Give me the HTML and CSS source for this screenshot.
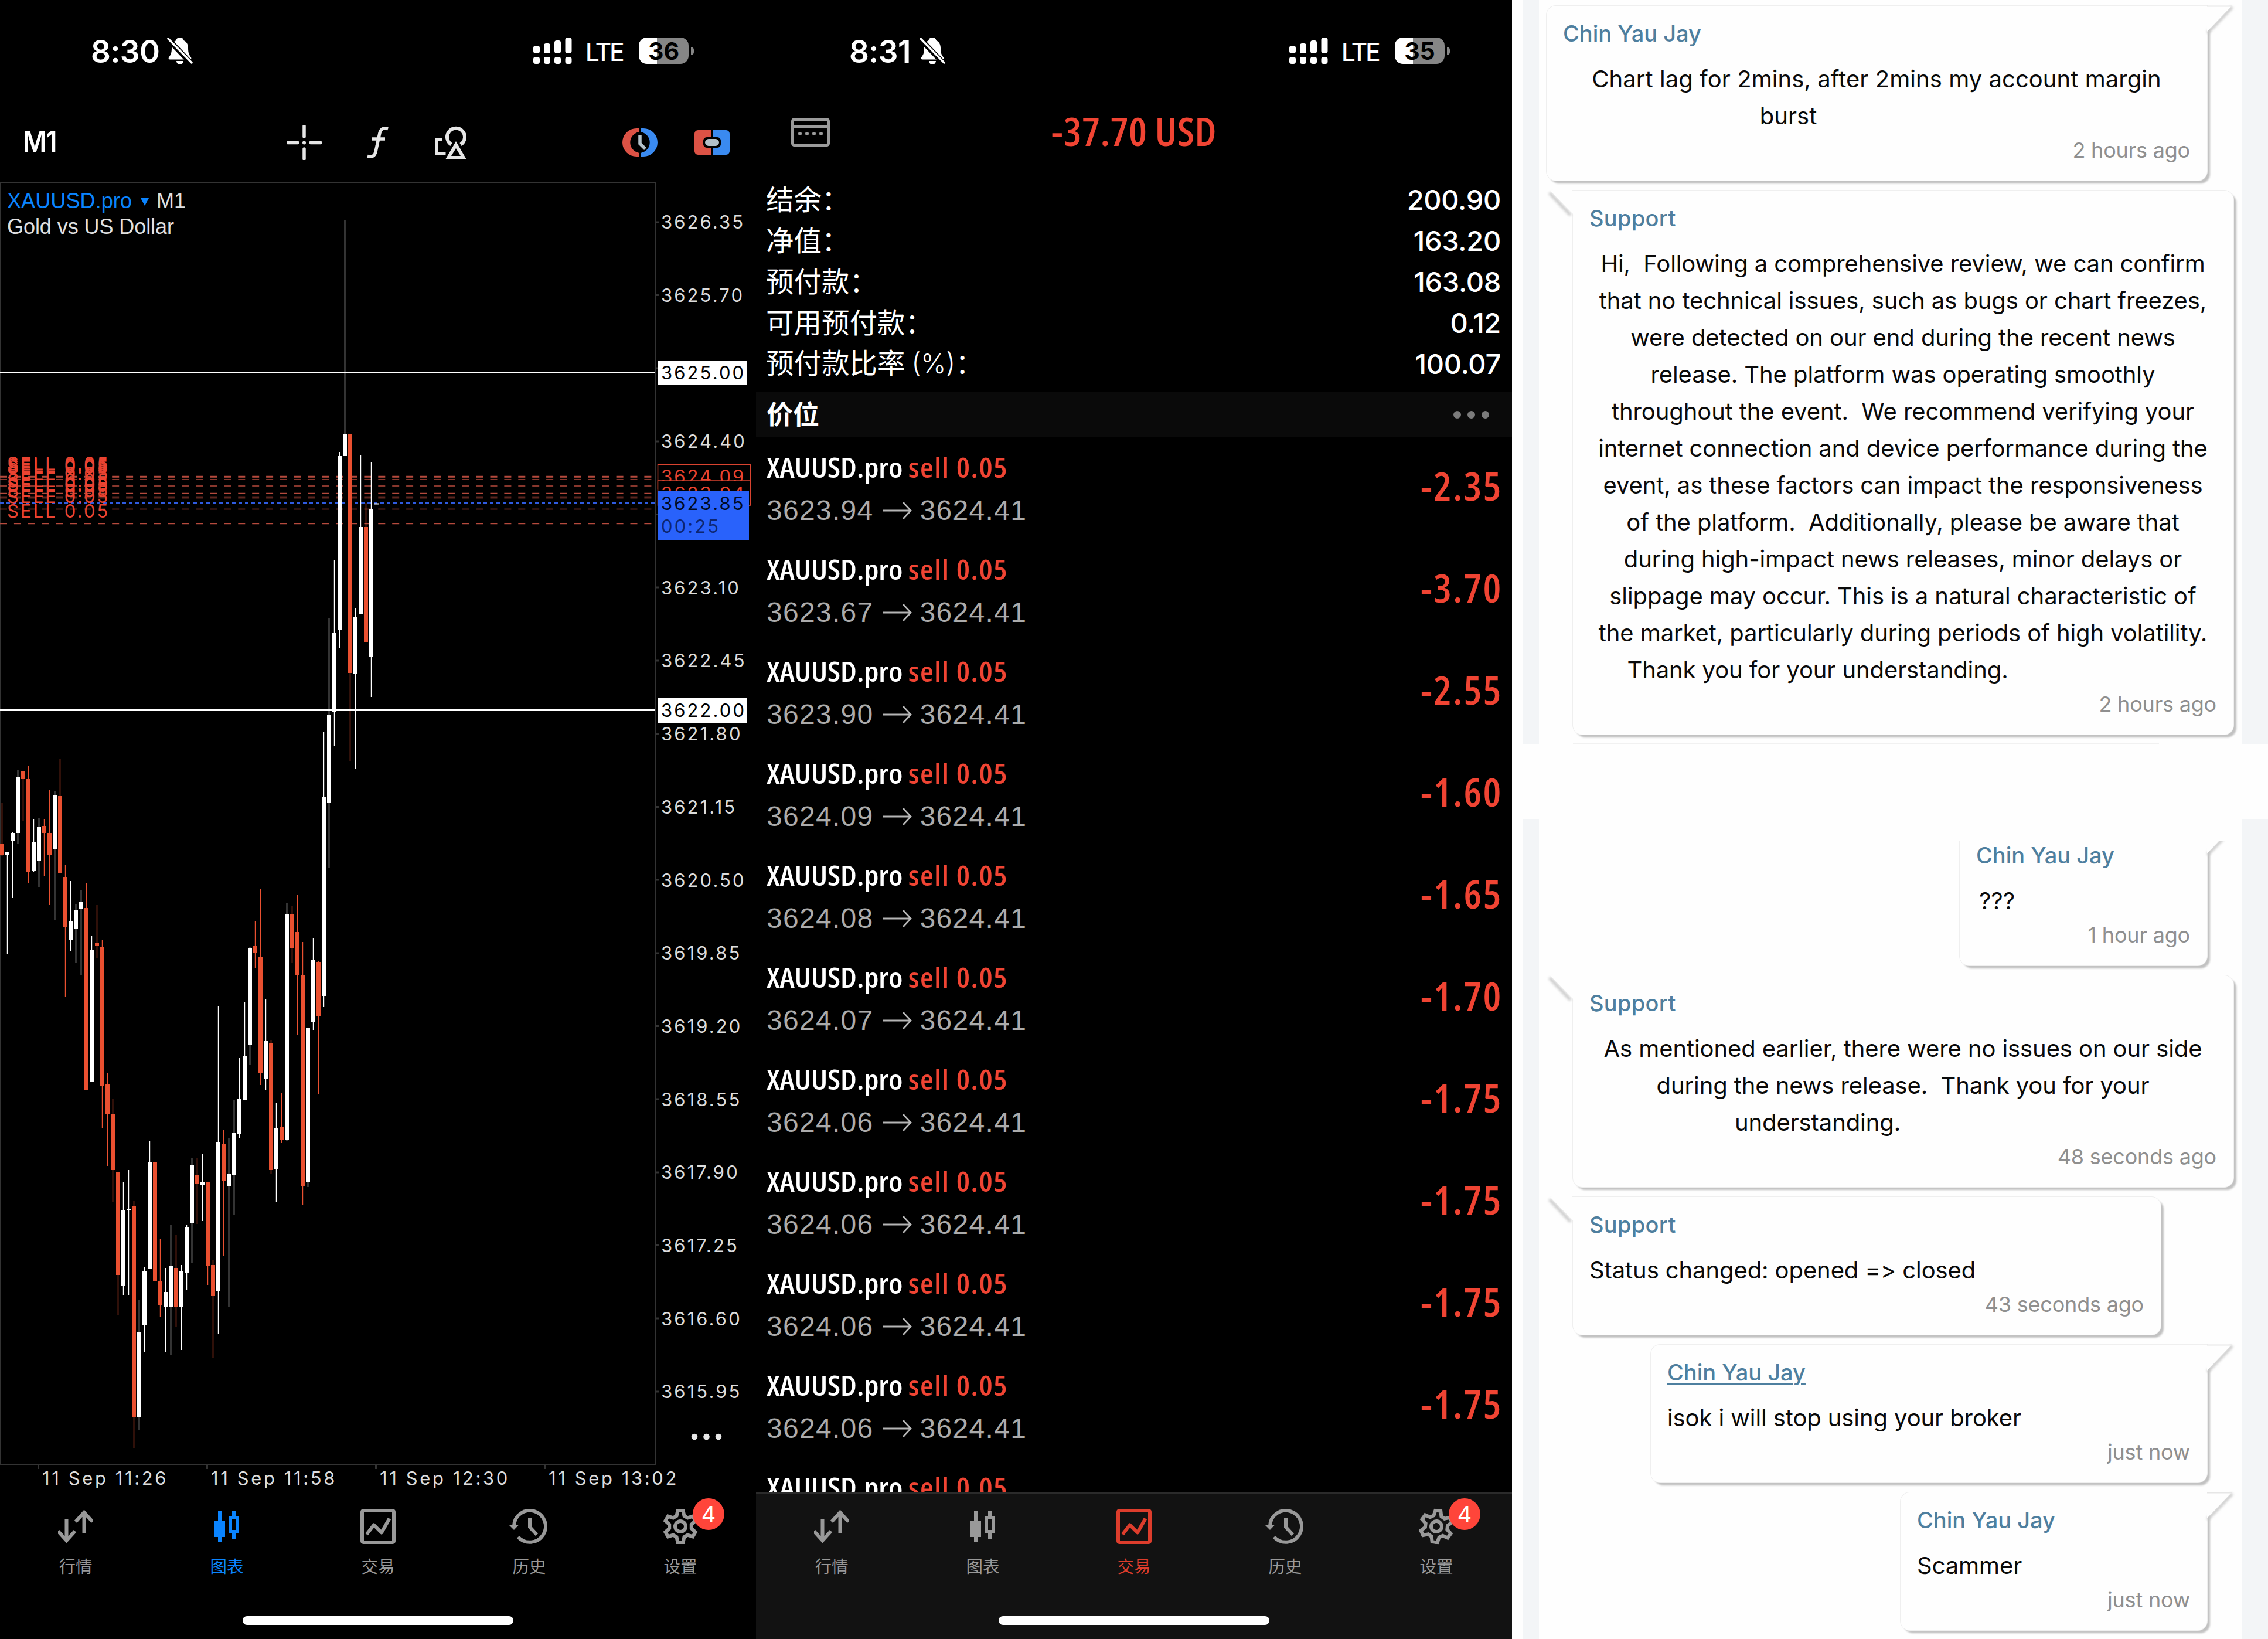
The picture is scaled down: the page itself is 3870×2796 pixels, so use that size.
FILE: index.html
```
<!DOCTYPE html>
<html lang="zh-CN">
<head>
<meta charset="utf-8">
<title>XAUUSD.pro</title>
<link rel="stylesheet" href="styles.css">
</head>
<body>
<svg class="sprite" aria-hidden="true">
  <symbol id="i-bell" viewBox="0 0 44 48">
    <path fill="currentColor" d="M22 1c-4 0-6 2-6.500 5C10.500 8 8 13 8 19c0 9-2 12-5 16-1 2 0 3.500 2 3.500h34c2 0 3-1.500 2-3.500-3-4-5-7-5-16 0-6-2.500-11-7.500-13C28 3 26 1 22 1zM16 41h12c-.5 4-3 6-6 6s-5.500-2-6-6z"/>
    <path d="M1 3l40 42" stroke="#000" stroke-width="9"/>
    <path d="M2 3l40 41" stroke="currentColor" stroke-width="3.500" stroke-linecap="round"/>
  </symbol>
  <symbol id="i-signal" viewBox="0 0 66 46">
    <g fill="currentColor">
      <rect x="0" y="14" width="11" height="13" rx="4"/><rect x="18" y="10" width="11" height="17" rx="4"/>
      <rect x="36" y="5" width="11" height="22" rx="4"/><rect x="54.500" y="0" width="11" height="27" rx="4"/>
      <rect x="0" y="33" width="11" height="12" rx="4"/><rect x="18" y="33" width="11" height="12" rx="4"/>
      <rect x="36" y="33" width="11" height="12" rx="4"/><rect x="54.500" y="33" width="11" height="12" rx="4"/>
    </g>
  </symbol>
  <symbol id="i-quotes" viewBox="0 0 60 60">
    <g fill="none" stroke="currentColor" stroke-width="6"><path d="M14.500 18v36M0 38l14.500 16L29 38"/><path d="M44.500 42V6M30 22L44.500 6 59 22"/></g>
  </symbol>
  <symbol id="i-chart" viewBox="0 0 60 60">
    <g fill="currentColor"><path d="M15 3h6v18h6v27h-6v9h-6v-9H9V21h6z"/><path fill-rule="evenodd" d="M39 3h6v9h6v30h-6v9h-6v-9h-6V12h6zM39 18v18h6V18z"/></g>
  </symbol>
  <symbol id="i-trade" viewBox="0 0 60 60">
    <g fill="none" stroke="currentColor" stroke-width="6"><rect x="3" y="3" width="54" height="54" rx="2"/><path d="M10.500 43.500L23 27.500l13 13L49.500 16.500" stroke-linejoin="round"/></g>
  </symbol>
  <symbol id="i-history" viewBox="-5 0 66 60">
    <g fill="none" stroke="currentColor" stroke-width="6"><path d="M4 29A27 27 0 1 1 11 48"/><path d="M31 15v16l12 13"/></g>
    <path fill="currentColor" d="M-5 27h17.500L4 36z"/>
  </symbol>
  <symbol id="i-settings" viewBox="-30 -30 60 60">
    <g fill="none" stroke="currentColor" stroke-width="6">
      <path d="M-6.500-18L-4.500-27H4.500L6.500-18 12.300-14.600 21.100-17.400 25.600-9.600 18.800-3.400V3.400L25.600 9.600 21.100 17.400 12.300 14.600 6.500 18 4.500 27H-4.500L-6.500 18-12.300 14.600-21.100 17.400-25.600 9.600-18.800 3.400V-3.400L-25.600-9.600-21.100-17.400-12.300-14.600z"/>
      <circle r="9"/>
    </g>
  </symbol>
</svg>

<main class="board">
  <section class="phone">
    <header class="status">
      <span class="status__time">8:30</span>
      <svg class="status__bell"><use href="#i-bell"/></svg>
      <svg class="status__signal"><use href="#i-signal"/></svg>
      <span class="status__net">LTE</span>
      <span class="battery"><span class="battery__body">36</span><i class="battery__nub"></i></span>
    </header>

    <nav class="toolbar">
      <span class="toolbar__tf">M1</span>
      <svg class="tool tool--cross" viewBox="0 0 60 60"><path d="M30 2v18M30 41v17M2 30.500h17M41 30.500h17" stroke="#e6e6e6" stroke-width="5.500" stroke-linecap="round"/><circle cx="30" cy="30.500" r="3" fill="#e6e6e6"/></svg>
      <svg class="tool tool--fn" viewBox="0 0 38 54"><path d="M37 4c-8-3-13 0-14.500 9L16 43c-1.500 7-6 9.500-14 7.500M9 21h23" fill="none" stroke="#e6e6e6" stroke-width="5.500"/></svg>
      <svg class="tool tool--shapes" viewBox="0 0 54 58"><g fill="none" stroke="#e6e6e6" stroke-width="6"><path d="M13 24H3v24h15.500"/><path d="M28 32.500A15 15 0 1 1 44 32.500"/></g><path fill="#e6e6e6" fill-rule="evenodd" d="M36 27l18 31H18zM36 39l-8 13h16z"/></svg>
      <svg class="tool tool--clock" viewBox="0 0 60 48"><path d="M28 0v6.300a18 18 0 0 0 0 35.400V48h-4a24 24 0 0 1 0-48z" fill="#dc5245"/><path d="M32 0v6.300a18 18 0 0 1 0 35.400V48h4a24 24 0 0 0 0-48z" fill="#3a8af0"/><path d="M30 12v14l9 9" fill="none" stroke="#b3c0c8" stroke-width="5.500"/></svg>
      <svg class="tool tool--one" viewBox="0 0 60 42"><path d="M6 0h22.500v42H6a6 6 0 0 1-6-6V6a6 6 0 0 1 6-6z" fill="#dc5245"/><path d="M31.500 0H54a6 6 0 0 1 6 6v30a6 6 0 0 1-6 6H31.500z" fill="#3a8af0"/><rect x="15" y="12" width="30" height="18" rx="6"/><rect x="18" y="15" width="24" height="12" rx="6" fill="#b3c0c8"/></svg>
    </nav>

    <svg class="chart" viewBox="0 310 1290 2236">
      <g fill="none" stroke="#333">
        <path d="M0 311.500H1119M0 2498.500H1119" stroke-width="3"/>
        <path d="M1 311V2499M1118.500 311V2499" stroke-width="2"/>
        <path d="M65.500 2500v6M353.500 2500v6M641.500 2500v6M930 2500v6" stroke-width="3"/>
        <path d="M1119 379h5M1119 503.500h5M1119 628h5M1119 753h5M1119 877.500h5M1119 1002h5M1119 1127h5M1119 1252h5M1119 1376.500h5M1119 1501h5M1119 1626h5M1119 1750.500h5M1119 1875h5M1119 2000h5M1119 2124.500h5M1119 2249h5M1119 2374h5" stroke-width="3"/>
      </g>

      <g class="orders" stroke="#b54a3d" stroke-width="1.700" stroke-dasharray="12 11.900">
        <path d="M0 812.500H1117M0 815H1117M0 818H1117M0 829H1117M0 841.500H1117M0 847.500H1117M0 849.500H1117M0 868.500H1117M0 893.500H1117"/>
      </g>
      <path d="M0 858H1117" stroke="#2f5be0" stroke-width="3" stroke-dasharray="6 5"/>

      <g fill="none" stroke="#fff">
        <path stroke-width="1.400" d="M12.500 1453V1628M21.500 1419V1532M30.500 1313V1440M57.500 1398V1488M66.500 1396V1513M93.500 1350V1570M120.500 1503V1622M129.500 1542V1643M138.500 1519V1663M156.500 1597V1845M210.500 2017V2209M219.500 1996V2209M237.500 2217V2440M246.500 2161V2307M255.500 1946V2165M282.500 2163V2307M291.500 2090V2311M309.500 2158V2303M318.500 2090V2200M327.500 1975V2154M345.500 1968V2083M372.500 1716V2275M390.500 1941V2229M399.500 1877V2073M408.500 1805V1941M417.500 1709V1876M426.500 1615V1816M453.500 1705V1860M471.500 1881V2050M489.500 1540V1946M525.500 1753V2025M534.500 1601V1757M552.500 1248V1718M561.500 1054V1480M570.500 955V1273M579.500 771V1106M588.500 375V740M606.500 1037V1311M615.500 776V1047M633.500 788V1189"/>
        <path stroke-width="7" d="M12.500 1453V1459M21.500 1421V1434M30.500 1325V1421M57.500 1436V1486M66.500 1411V1469M93.500 1356V1448M120.500 1572V1603M129.500 1553V1584M138.500 1538V1551M156.500 1620V1845M210.500 2065V2194M219.500 2062V2065M237.500 2273V2418M246.500 2169V2261M255.500 1983V2165M282.500 2204V2230M291.500 2159V2229M309.500 2169V2230M318.500 2094V2171M327.500 1987V2087M345.500 2016V2021M372.500 1948V2202M390.500 2002V2023M399.500 1933V2004M408.500 1874V1935M417.500 1801V1876M426.500 1618V1782M453.500 1776V1841M471.500 1925V1994M489.500 1559V1945M525.500 1753V2016M534.500 1638V1743M552.500 1359V1699M561.500 1219V1369M570.500 1079V1214M579.500 778V1074M588.500 740V778M606.500 1053V1150M615.500 899V1047M633.500 868V1120"/>
        <path stroke-width="2" d="M638 859.500H646"/>
      </g>
      <g fill="none" stroke="#ea5030">
        <path stroke-width="1.400" d="M3.500 1369V1461M39.500 1315V1400M48.500 1306V1507M75.500 1398V1494M84.500 1348V1544M102.500 1294V1490M111.500 1476V1701M147.500 1507V1860M165.500 1544V1634M174.500 1603V1925M183.500 1831V1989M192.500 1874V2050M201.500 2000V2244M228.500 2048V2470M273.500 2113V2246M300.500 2106V2263M336.500 1975V2088M354.500 2016V2192M363.500 2150V2317M381.500 1927V2142M435.500 1572V1651M444.500 1517V1851M462.500 1774V2002M480.500 1864V1950M498.500 1546V1643M507.500 1526V1766M516.500 1607V2056M543.500 1640V1866M597.500 740V1298M624.500 858V1095"/>
        <path stroke-width="7" d="M3.500 1440V1459M39.500 1315V1329M48.500 1329V1488M75.500 1409V1421M84.500 1421V1459M102.500 1358V1490M111.500 1496V1582M147.500 1549V1860M165.500 1609V1613M174.500 1615V1852M183.500 1849V1900M192.500 1900V1996M201.500 2000V2175M228.500 2058V2418M264.500 1983V2186M273.500 2186V2227M300.500 2163V2230M336.500 2004V2019M354.500 2016V2159M363.500 2158V2211M381.500 1952V2014M435.500 1613V1626M444.500 1632V1831M462.500 1780V1996M480.500 1923V1945M498.500 1559V1618M507.500 1590V1663M516.500 1663V2023M543.500 1641V1734M597.500 740V1148M624.500 899V1095"/>
      </g>
      <path d="M0 635.500H1117M0 1211.500H1117" stroke="#fff" stroke-width="3"/>

      <g class="sell">
        <text x="12" y="802">SELL 0.05</text><text x="12" y="804.500">SELL 0.05</text><text x="12" y="807.500">SELL 0.05</text>
        <text x="12" y="818.500">SELL 0.05</text><text x="12" y="831">SELL 0.05</text><text x="12" y="837">SELL 0.05</text>
        <text x="12" y="839">SELL 0.05</text><text x="12" y="847.500">SELL 0.05</text><text x="12" y="857.500">SELL 0.05</text>
        <text x="12" y="882.500">SELL 0.05</text>
      </g>

      <text class="legend legend--sym" x="12" y="355" textLength="213">XAUUSD.pro</text>
      <path d="M240 338h14l-7 13z" fill="#0a84ff"/>
      <text class="legend" x="267" y="355">M1</text>
      <text class="legend" x="12" y="399" textLength="285">Gold vs US Dollar</text>

      <g class="axis">
        <text x="1128" y="390">3626.35</text><text x="1128" y="515">3625.70</text><text x="1128" y="764">3624.40</text>
        <text x="1128" y="1013.500">3623.10</text><text x="1128" y="1138">3622.45</text><text x="1128" y="1263">3621.80</text>
        <text x="1128" y="1388">3621.15</text><text x="1128" y="1512.500">3620.50</text><text x="1128" y="1637">3619.85</text>
        <text x="1128" y="1762">3619.20</text><text x="1128" y="1886.500">3618.55</text><text x="1128" y="2011">3617.90</text>
        <text x="1128" y="2136">3617.25</text><text x="1128" y="2260.500">3616.60</text><text x="1128" y="2385">3615.95</text>
      </g>
      <g class="axis axis--date">
        <text x="72" y="2533">11 Sep 11:26</text><text x="360" y="2533">11 Sep 11:58</text>
        <text x="648" y="2533">11 Sep 12:30</text><text x="936" y="2533">11 Sep 13:02</text>
      </g>
      <rect x="1122" y="615" width="153" height="42" fill="#fff"/><text class="tag" x="1128" y="647">3625.00</text>
      <rect x="1122" y="1191" width="153" height="42" fill="#fff"/><text class="tag" x="1128" y="1223">3622.00</text>
      <rect x="1122.500" y="792.500" width="158" height="42" fill="#000" stroke="#d8432f" stroke-width="1.500"/><text class="tag tag--red" x="1128" y="824">3624.09</text>
      <rect x="1122.500" y="820" width="158" height="42" fill="#000" stroke="#d8432f" stroke-width="1.500"/><text class="tag tag--red" x="1128" y="853">3623.94</text>
      <rect x="1122" y="838" width="156" height="84" fill="#2962fb"/>
      <text class="tag tag--now" x="1128" y="870">3623.85</text><text class="tag tag--left" x="1128" y="909">00:25</text>
      <g fill="#e8e8e8"><circle cx="1185" cy="2451" r="5.300"/><circle cx="1205.500" cy="2451" r="5.300"/><circle cx="1226" cy="2451" r="5.300"/></g>
    </svg>

    <footer class="tabs">
      <div class="tabs__row">
        <a class="tab"><svg class="tab__icon"><use href="#i-quotes"/></svg>行情</a>
        <a class="tab tab--blue"><svg class="tab__icon"><use href="#i-chart"/></svg>图表</a>
        <a class="tab"><svg class="tab__icon"><use href="#i-trade"/></svg>交易</a>
        <a class="tab"><svg class="tab__icon tab__icon--history"><use href="#i-history"/></svg>历史</a>
        <a class="tab"><svg class="tab__icon"><use href="#i-settings"/></svg>设置<b class="badge">4</b></a>
      </div>
      <i class="home"></i>
    </footer>
  </section>

  <section class="phone">
    <header class="status status--late">
      <span class="status__time">8:31</span>
      <svg class="status__bell"><use href="#i-bell"/></svg>
      <svg class="status__signal"><use href="#i-signal"/></svg>
      <span class="status__net">LTE</span>
      <span class="battery"><span class="battery__body">35</span><i class="battery__nub"></i></span>
    </header>

    <div class="account">
      <svg class="account__card" viewBox="0 0 66 49"><rect x="2.500" y="2.500" width="61" height="44" rx="3" fill="none" stroke="#9b9b9b" stroke-width="5"/><path d="M3 15h60" stroke="#9b9b9b" stroke-width="5"/><g fill="#9b9b9b"><circle cx="15" cy="27" r="3"/><circle cx="27" cy="27" r="3"/><circle cx="39" cy="27" r="3"/><circle cx="51" cy="27" r="3"/></g></svg>
      <span class="account__total">-37.70 USD</span>
    </div>

    <dl class="summary">
      <div class="summary__row"><dt>结余：</dt><dd>200.90</dd></div>
      <div class="summary__row"><dt>净值：</dt><dd>163.20</dd></div>
      <div class="summary__row"><dt>预付款：</dt><dd>163.08</dd></div>
      <div class="summary__row"><dt>可用预付款：</dt><dd>0.12</dd></div>
      <div class="summary__row"><dt>预付款比率 <span class="pct">(%)</span>：</dt><dd>100.07</dd></div>
    </dl>

    <div class="section">
      <span>价位</span>
      <span class="dots"><i></i><i></i><i></i></span>
    </div>

    <ul class="positions">
      <li class="pos"><div><p class="pos__name">XAUUSD.pro <em>sell 0.05</em></p><p class="pos__price">3623.94<svg class="arrow" viewBox="0 0 50 34"><path d="M0 17h48M35 3l13 14-13 14"/></svg>3624.41</p></div><b class="pos__pl">-2.35</b></li>
      <li class="pos"><div><p class="pos__name">XAUUSD.pro <em>sell 0.05</em></p><p class="pos__price">3623.67<svg class="arrow" viewBox="0 0 50 34"><path d="M0 17h48M35 3l13 14-13 14"/></svg>3624.41</p></div><b class="pos__pl">-3.70</b></li>
      <li class="pos"><div><p class="pos__name">XAUUSD.pro <em>sell 0.05</em></p><p class="pos__price">3623.90<svg class="arrow" viewBox="0 0 50 34"><path d="M0 17h48M35 3l13 14-13 14"/></svg>3624.41</p></div><b class="pos__pl">-2.55</b></li>
      <li class="pos"><div><p class="pos__name">XAUUSD.pro <em>sell 0.05</em></p><p class="pos__price">3624.09<svg class="arrow" viewBox="0 0 50 34"><path d="M0 17h48M35 3l13 14-13 14"/></svg>3624.41</p></div><b class="pos__pl">-1.60</b></li>
      <li class="pos"><div><p class="pos__name">XAUUSD.pro <em>sell 0.05</em></p><p class="pos__price">3624.08<svg class="arrow" viewBox="0 0 50 34"><path d="M0 17h48M35 3l13 14-13 14"/></svg>3624.41</p></div><b class="pos__pl">-1.65</b></li>
      <li class="pos"><div><p class="pos__name">XAUUSD.pro <em>sell 0.05</em></p><p class="pos__price">3624.07<svg class="arrow" viewBox="0 0 50 34"><path d="M0 17h48M35 3l13 14-13 14"/></svg>3624.41</p></div><b class="pos__pl">-1.70</b></li>
      <li class="pos"><div><p class="pos__name">XAUUSD.pro <em>sell 0.05</em></p><p class="pos__price">3624.06<svg class="arrow" viewBox="0 0 50 34"><path d="M0 17h48M35 3l13 14-13 14"/></svg>3624.41</p></div><b class="pos__pl">-1.75</b></li>
      <li class="pos"><div><p class="pos__name">XAUUSD.pro <em>sell 0.05</em></p><p class="pos__price">3624.06<svg class="arrow" viewBox="0 0 50 34"><path d="M0 17h48M35 3l13 14-13 14"/></svg>3624.41</p></div><b class="pos__pl">-1.75</b></li>
      <li class="pos"><div><p class="pos__name">XAUUSD.pro <em>sell 0.05</em></p><p class="pos__price">3624.06<svg class="arrow" viewBox="0 0 50 34"><path d="M0 17h48M35 3l13 14-13 14"/></svg>3624.41</p></div><b class="pos__pl">-1.75</b></li>
      <li class="pos"><div><p class="pos__name">XAUUSD.pro <em>sell 0.05</em></p><p class="pos__price">3624.06<svg class="arrow" viewBox="0 0 50 34"><path d="M0 17h48M35 3l13 14-13 14"/></svg>3624.41</p></div><b class="pos__pl">-1.75</b></li>
      <li class="pos"><div><p class="pos__name">XAUUSD.pro <em>sell 0.05</em></p></div><b class="pos__pl">-2.35</b></li>
    </ul>

    <footer class="tabs tabs--raised">
      <div class="tabs__row">
        <a class="tab"><svg class="tab__icon"><use href="#i-quotes"/></svg>行情</a>
        <a class="tab"><svg class="tab__icon"><use href="#i-chart"/></svg>图表</a>
        <a class="tab tab--red"><svg class="tab__icon"><use href="#i-trade"/></svg>交易</a>
        <a class="tab"><svg class="tab__icon tab__icon--history"><use href="#i-history"/></svg>历史</a>
        <a class="tab"><svg class="tab__icon tab__icon--turned"><use href="#i-settings"/></svg>设置<b class="badge">4</b></a>
      </div>
      <i class="home"></i>
    </footer>
  </section>

  <section class="chat">
    <div class="thread thread--first">
      <article class="msg msg--mine msg--wide">
        <svg class="tail tail--right" viewBox="0 0 50 54"><path class="tail__edge" d="M43 2L1 46"/><path class="tail__fill" d="M0 0H42L0 44z"/><path class="tail__top" d="M0 .5H43"/></svg>
        <h3>Chin Yau Jay</h3>
        <p>Chart lag for 2mins, after 2mins my account margin<br>burst<i class="pad"></i></p>
        <time>2 hours ago</time>
      </article>
      <article class="msg msg--theirs msg--wide">
        <svg class="tail tail--left" viewBox="0 0 46 54"><path class="tail__edge" d="M2 4L38 42"/><path class="tail__fill" d="M3 0H46V44z"/></svg>
        <h3>Support</h3>
        <p>Hi,&nbsp; Following a comprehensive review, we can confirm<br>that no technical issues, such as bugs or chart freezes,<br>were detected on our end during the recent news<br>release. The platform was operating smoothly<br>throughout the event.&nbsp; We recommend verifying your<br>internet connection and device performance during the<br>event, as these factors can impact the responsiveness<br>of the platform.&nbsp; Additionally, please be aware that<br>during high-impact news releases, minor delays or<br>slippage may occur. This is a natural characteristic of<br>the market, particularly during periods of high volatility.<br>Thank you for your understanding.<i class="pad"></i></p>
        <time>2 hours ago</time>
      </article>
      <div class="next"></div>
    </div>

    <div class="thread thread--second">
      <div class="cut">
        <article class="msg msg--mine msg--short">
          <svg class="tail tail--right" viewBox="0 0 50 54"><path class="tail__edge" d="M43 2L1 46"/><path class="tail__fill" d="M0 0H42L0 44z"/></svg>
          <h3>Chin Yau Jay</h3>
          <p class="indent">???</p>
          <time>1 hour ago</time>
        </article>
      </div>
      <article class="msg msg--theirs msg--wide">
        <svg class="tail tail--left" viewBox="0 0 46 54"><path class="tail__edge" d="M2 4L38 42"/><path class="tail__fill" d="M3 0H46V44z"/></svg>
        <h3>Support</h3>
        <p>As mentioned earlier, there were no issues on our side<br>during the news release.&nbsp; Thank you for your<br>understanding.<i class="pad"></i></p>
        <time>48 seconds ago</time>
      </article>
      <article class="msg msg--theirs msg--status">
        <svg class="tail tail--left" viewBox="0 0 46 54"><path class="tail__edge" d="M2 4L38 42"/><path class="tail__fill" d="M3 0H46V44z"/></svg>
        <h3>Support</h3>
        <p class="line">Status changed: opened =&gt; closed</p>
        <time>43 seconds ago</time>
      </article>
      <article class="msg msg--mine msg--reply">
        <svg class="tail tail--right" viewBox="0 0 50 54"><path class="tail__edge" d="M43 2L1 46"/><path class="tail__fill" d="M0 0H42L0 44z"/><path class="tail__top" d="M0 .5H43"/></svg>
        <h3><u>Chin Yau Jay</u></h3>
        <p class="line">isok i will stop using your broker</p>
        <time>just now</time>
      </article>
      <article class="msg msg--mine msg--last">
        <svg class="tail tail--right" viewBox="0 0 50 54"><path class="tail__edge" d="M43 2L1 46"/><path class="tail__fill" d="M0 0H42L0 44z"/><path class="tail__top" d="M0 .5H43"/></svg>
        <h3>Chin Yau Jay</h3>
        <p class="line">Scammer</p>
        <time>just now</time>
      </article>
    </div>
  </section>
</main>
</body>
</html>
```
FILE: styles.css
```
* { box-sizing: border-box; margin: 0; padding: 0; }
body { background: #fefefe; font-family: Inter, "Noto Sans CJK SC", sans-serif; }
ul { list-style: none; }
em, i { font-style: normal; }
.sprite { position: absolute; width: 0; height: 0; }
.board { display: grid; grid-template-columns: 1290px 1290px 1290px; width: 3870px; height: 2796px; overflow: hidden; }

/* phones */
.phone { display: flex; flex-direction: column; height: 2796px; background: #000; color: #fff; overflow: hidden; }

.status { display: flex; align-items: center; flex: none; height: 173px; padding-left: 155px; }
.status__time { width: 130px; font-size: 53px; font-weight: 600; letter-spacing: -.5px; padding-top: 2px; }
.status__bell { width: 44px; height: 48px; }
.status--late .status__time { width: 124px; padding-left: 4px; }
.status__signal { width: 66px; height: 46px; margin-left: 581px; }
.status--late .status__signal { margin-left: 587px; }
.status__net { width: 86px; margin-left: 23px; padding-top: 4px; font-size: 42px; font-weight: 500; letter-spacing: -3px; }
.battery { display: flex; align-items: center; gap: 4px; margin-left: 5px; }
.battery__body { width: 85px; height: 45px; border-radius: 14px; line-height: 46px; text-align: center; color: #000; font-size: 41px; font-weight: 700; background: linear-gradient(90deg, #fff 31px, #868686 31px); }
.battery__nub { width: 5px; height: 14px; border-radius: 0 5px 5px 0; background: #868686; }

.toolbar { display: flex; align-items: center; flex: none; height: 137px; padding: 3px 0 0 39px; }
.toolbar__tf { width: 61px; margin-top: -3px; font-size: 49px; font-weight: 600; letter-spacing: -1px; transform: scaleX(.9); transform-origin: left; }
.tool { flex: none; }
.tool--cross { width: 60px; height: 60px; margin-left: 389px; }
.tool--fn { width: 38px; height: 54px; margin-left: 76px; }
.tool--shapes { width: 54px; height: 58px; margin-left: 79px; }
.tool--clock { width: 60px; height: 48px; margin-left: 266px; }
.tool--one { width: 60px; height: 42px; margin-left: 63px; }

.chart { display: block; flex: none; width: 1290px; height: 2236px; }
.axis text, .tag, .sell text { font-size: 31px; letter-spacing: 3.1px; }
.axis text { fill: #dcdcdc; }
.axis--date text { letter-spacing: 3.6px; }
.tag { fill: #000; }
.tag--red { fill: #e8432f; }
.tag--now { fill: #000a24; }
.tag--left { fill: #0d2671; }
.sell text { fill: #ea4331; letter-spacing: 3.1px; }
.legend { font-family: "Liberation Sans", sans-serif; font-size: 36px; fill: #e0e0e0; }
.legend--sym { fill: #0a84ff; }

.tabs { flex: none; height: 250px; padding-top: 28px; background: #000; position: relative; }
.tabs--raised { background: #121212; padding-top: 26px; border-top: 2px solid #2b2b2b; }
.tabs__row { display: grid; grid-template-columns: repeat(5, 258px); }
.tab { position: relative; display: flex; flex-direction: column; align-items: center; color: #999; font: 28.5px/35px "Noto Sans CJK SC", sans-serif; }
.tab__icon { width: 60px; height: 60px; margin-bottom: 19px; }
.tab__icon--history { width: 66px; margin-right: 5px; }
.tab__icon--turned { transform: rotate(6deg); }
.tab--blue { color: #0a84ff; }
.tab--red { color: #dd3d2c; }
.badge { position: absolute; left: 150px; top: -18px; width: 54px; height: 54px; border-radius: 50%; background: #ff453a; color: #fff; font: 400 38px/54px Inter, sans-serif; text-align: center; }
.home { display: block; width: 462px; height: 15px; margin: 69px 0 0 414px; border-radius: 8px; background: #fff; }

/* trade screen */
.account { display: grid; grid-template-columns: 66px 1fr 66px; align-items: center; flex: none; height: 105px; padding: 0 60px; }
.account__card { width: 66px; height: 49px; }
.account__total { margin-top: -5px; text-align: center; color: #f04433; font: 600 66px/100px "Open Sans", sans-serif; font-stretch: 75%; letter-spacing: .5px; transform: scaleX(1.05); }
.summary { flex: none; margin-top: 27px; padding: 0 19px 0 17px; }
.summary__row { display: flex; justify-content: space-between; align-items: center; height: 70px; }
.summary dt { font: 400 47.500px/64px "Noto Sans CJK SC", sans-serif; margin-top: -4px; }
.summary dd { font-size: 47px; font-weight: 500; letter-spacing: -.3px; }
.pct { font-family: Inter, sans-serif; font-weight: 300; font-size: 46px; }
.section { display: flex; justify-content: space-between; align-items: center; flex: none; height: 78px; margin-top: 13px; padding: 0 39px 4px 18px; background: #0a0a0a; font: 700 45px/70px "Noto Sans CJK SC", sans-serif; }
.dots { display: flex; gap: 11px; padding-top: 4px; }
.dots i { width: 13px; height: 13px; border-radius: 50%; background: #7b7b7b; }
.positions { flex: 1; min-height: 0; overflow: hidden; }
.pos { display: flex; justify-content: space-between; align-items: flex-start; height: 174px; padding: 22px 17px 0 18px; white-space: nowrap; }
.pos__name { font: 600 47px/58px "Open Sans", sans-serif; font-stretch: 75%; transform: scaleX(1.108); transform-origin: left; }
.pos__name em { color: #f04433; letter-spacing: 1.4px; }
.pos__price { display: flex; align-items: center; margin-top: 16px; font: 48px/58px "Liberation Sans", sans-serif; letter-spacing: 1.3px; color: #ababab; }
.arrow { width: 50px; height: 34px; margin: 0 14px 0 15px; fill: none; stroke: #b5b5b5; stroke-width: 3; }
.pos__pl { margin-top: 10px; color: #f04433; font: 600 66px/100px "Open Sans", sans-serif; font-stretch: 75%; letter-spacing: 2px; transform: scaleX(1.045); transform-origin: right; }

/* support chat */
.chat { display: flex; flex-direction: column; gap: 128px; padding-left: 18px; background: #fefefe; }
.thread { display: flex; flex-direction: column; gap: 17px; flex: none; border: solid #f3f5f7; border-width: 0 45px 0 28px; padding: 0 59px 0 58px; }
.thread--first { height: 1270px; padding-top: 10px; }
.thread--second { height: 1398px; padding-top: 36px; }
.next { width: 1000px; height: 2px; margin-top: -2px; background: #f1f1f1; }
.cut { overflow: hidden; flex: none; display: flex; justify-content: flex-end; height: 230px; margin: 0 -55px -17px -58px; padding-right: 55px; }
.msg { position: relative; flex: none; display: flex; flex-direction: column; padding: 24px 29px 30px; border-radius: 16px; background: #fefefe; box-shadow: 0 0 0 1px #efefef, 5px 5px 3px #c2c2c2; }
.msg--mine { align-self: flex-end; border-top-right-radius: 0; padding-left: 28px; }
.msg--theirs { align-self: flex-start; margin-right: -50px; border-top-left-radius: 0; padding-left: 28px; }
.cut .msg { align-self: flex-start; margin-top: -22px; }
.msg--wide { width: 1127px; }
.msg--short { width: 422px; height: 235px; }
.msg--status { width: 1003px; }
.msg--reply { width: 949px; }
.msg--last { width: 523px; }
.msg h3 { height: 46px; font-size: 38px; line-height: 46px; font-weight: 500; color: #4e7f9f; }
.msg--theirs h3 { letter-spacing: .3px; }
.msg u { text-underline-offset: 5px; text-decoration-thickness: 3px; }
.msg p { margin-top: 23px; font-size: 40px; line-height: 63px; letter-spacing: -.1px; color: #0a0a0a; text-align: center; white-space: nowrap; font-feature-settings: "calt" 0; }
.msg .line, .msg .indent { text-align: left; }
.msg .indent { padding-left: 5px; }
.msg time { position: relative; top: 1px; align-self: flex-end; margin-top: 3px; font-size: 36px; line-height: 46px; letter-spacing: -.2px; color: #8f8f8f; }
.pad { display: inline-block; width: 291px; }
.thread--first .msg--mine p { letter-spacing: .05px; }
.thread--first .msg--mine .pad { width: 301px; }
.tail { position: absolute; top: 0; overflow: visible; }
.tail--right { left: 100%; width: 50px; height: 54px; }
.tail--left { right: 100%; width: 46px; height: 54px; margin-right: -4px; }
.tail__fill { fill: #fefefe; }
.tail__edge { fill: none; stroke: #c8c8c8; stroke-width: 5; filter: blur(2px); }
.tail__top { fill: none; stroke: #e6e6e6; stroke-width: 2; }
```
